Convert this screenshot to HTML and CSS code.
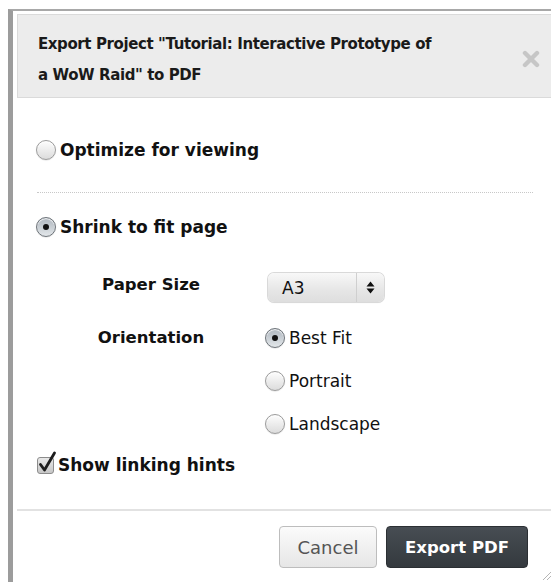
FILE: index.html
```html
<!DOCTYPE html>
<html lang="en">
<head>
<meta charset="utf-8">
<title>Export to PDF</title>
<link rel="stylesheet" href="styles.css">
</head>
<body>
<div class="frame">
  <div class="dialog">
    <div class="dialog-header">
      <h1 class="dialog-title">Export Project "Tutorial: Interactive Prototype of a WoW Raid" to PDF</h1>
      <span class="close" aria-label="Close">
        <svg width="20" height="18" viewBox="0 0 20 18">
          <path d="M4 3 L16 15 M16 3 L4 15" stroke="#c6c6c6" stroke-width="4.4" stroke-linecap="round"/>
        </svg>
      </span>
    </div>

    <div class="dialog-body">
      <label class="choice choice-main">
        <span class="radio"></span>
        <span>Optimize for viewing</span>
      </label>

      <div class="dotted-rule"></div>

      <label class="choice choice-main choice-shrink">
        <span class="radio checked"></span>
        <span>Shrink to fit page</span>
      </label>

      <div class="options">
        <div class="opt-label">Paper Size</div>
        <div class="opt-value">
          <div class="select">
            <span class="select-text">A3</span>
            <span class="select-arrows">
              <svg width="9" height="13" viewBox="0 0 9 13">
                <path d="M4.5 0.5 L8.5 5.5 L0.5 5.5 Z M4.5 12.5 L8.5 7.5 L0.5 7.5 Z" fill="#111"/>
              </svg>
            </span>
          </div>
        </div>

        <div class="opt-label">Orientation</div>
        <div class="opt-value radio-list">
          <label class="choice choice-sub">
            <span class="radio checked"></span>
            <span>Best Fit</span>
          </label>
          <label class="choice choice-sub">
            <span class="radio"></span>
            <span>Portrait</span>
          </label>
          <label class="choice choice-sub">
            <span class="radio"></span>
            <span>Landscape</span>
          </label>
        </div>
      </div>

      <label class="choice choice-main choice-hints">
        <span class="checkbox">
          <svg width="22" height="24" viewBox="0 0 22 24">
            <path d="M4.5 14.5 L8.5 20 L18.5 3" fill="none" stroke="#1c1c1c" stroke-width="2.8" stroke-linecap="round" stroke-linejoin="round"/>
          </svg>
        </span>
        <span>Show linking hints</span>
      </label>
    </div>

    <div class="dialog-footer">
      <button class="btn btn-cancel" type="button">Cancel</button>
      <button class="btn btn-primary" type="button">Export PDF</button>
    </div>

    <span class="grip">
      <svg width="14" height="14" viewBox="0 0 14 14">
        <path d="M13 3 L3 13 M13 7 L7 13 M13 11 L11 13" stroke="#b5b5b5" stroke-width="1"/>
      </svg>
    </span>
  </div>
</div>
</body>
</html>
```

FILE: styles.css
```css
html, body {
  margin: 0;
  padding: 0;
  background: #ffffff;
  overflow: hidden;
}

body {
  font-family: "DejaVu Sans", "Liberation Sans", sans-serif;
  color: #111;
  width: 551px;
  height: 582px;
}

/* outer window edge */
.frame {
  margin: 9px 0 0 8px;
  border-top: 2px solid #a8a8a8;
  border-left: 5px solid #9c9c9c;
  padding: 3px 0 0 4px;
  height: 582px;
  box-sizing: border-box;
  width: 549px;
}

.dialog {
  position: relative;
  width: 536px;
  background: #fff;
  min-height: 560px;
}

/* header */
.dialog-header {
  display: flex;
  align-items: flex-start;
  background: #ececec;
  border: 1px solid #dadada;
  border-right: none;
  height: 84px;
  box-sizing: border-box;
  padding: 14px 12px 0 20px;
}

.dialog-title {
  flex: none;
  width: 400px;
  margin: 0;
  font-size: 15px;
  letter-spacing: -0.4px;
  line-height: 31px;
  font-weight: bold;
  color: #1a1a1a;
}

.close {
  display: flex;
  margin: 21px 0 0 auto;
}

/* body */
.dialog-body {
  padding: 40px 20px 0 20px;
}

.choice {
  display: flex;
  align-items: center;
  gap: 4px;
  height: 24px;
}

.choice-main {
  font-size: 17px;
  font-weight: bold;
  margin-left: -1px;
}

.dotted-rule {
  margin-top: 30px;
  border-top: 1px dotted #c8c8c8;
}

.choice-shrink {
  margin-top: 22px;
}

.radio {
  width: 18px;
  height: 18px;
  border-radius: 50%;
  border: 1px solid #9b9b9b;
  background: linear-gradient(#fdfdfd, #dcdcdc);
  box-shadow: inset 0 1px 1px rgba(255, 255, 255, 0.9), 0 0.5px 1px rgba(0, 0, 0, 0.15);
  flex: none;
  position: relative;
}

.radio.checked {
  border-color: #6e747a;
  background: linear-gradient(#aeb6be, #e3e7ea);
}

.radio.checked::after {
  content: "";
  position: absolute;
  left: 6px;
  top: 6px;
  width: 6px;
  height: 6px;
  border-radius: 50%;
  background: #111;
}

/* paper / orientation options */
.options {
  display: grid;
  grid-template-columns: 178px 1fr;
  column-gap: 25px;
  margin: 34px 0 0 25px;
  row-gap: 24px;
}

.opt-label {
  text-align: center;
  font-size: 16.5px;
  font-weight: bold;
  line-height: 24px;
}

.select {
  display: flex;
  align-items: center;
  width: 116px;
  height: 29px;
  margin-left: 3px;
  border-radius: 6px;
  background: linear-gradient(#f8f8f8, #e6e6e6 60%, #dedede);
  box-shadow: 0 0 0 1px #d9d9d9, 0 1px 1px rgba(0, 0, 0, 0.12);
  box-sizing: border-box;
}

.select-text {
  flex: 1;
  padding-left: 14px;
  font-size: 17px;
}

.select-arrows {
  display: flex;
  align-items: center;
  justify-content: center;
  width: 27px;
  height: 100%;
  border-left: 1px solid #cfcfcf;
}

.radio-list {
  display: flex;
  flex-direction: column;
  gap: 19px;
}

.choice-sub {
  font-size: 17px;
  margin-left: 0;
}

.choice-hints {
  margin-top: 17px;
}

.checkbox {
  position: relative;
  width: 17px;
  height: 17px;
  border: 1px solid #8c8c8c;
  border-radius: 3px;
  background: linear-gradient(#e8e8e8, #c6c6c6);
  box-sizing: border-box;
  flex: none;
  margin-left: 1px;
}

.checkbox svg {
  position: absolute;
  left: -2px;
  top: -8px;
}

/* footer */
.dialog-footer {
  margin-top: 32px;
  border-top: 2px solid #e2e2e2;
  display: flex;
  justify-content: flex-end;
  gap: 9px;
  padding: 15px 25px 0 0;
}

.btn {
  height: 42px;
  border-radius: 4px;
  font-family: "DejaVu Sans", "Liberation Sans", sans-serif;
  font-size: 18px;
  padding: 0;
  cursor: pointer;
}

.btn-cancel {
  width: 98px;
  color: #555;
  border: 1px solid #bdbdbd;
  background: linear-gradient(#fbfbfb, #e6e6e6);
}

.btn-primary {
  width: 142px;
  color: #fff;
  font-size: 16.5px;
  font-weight: bold;
  border: 1px solid #2b2f33;
  background: linear-gradient(#474d53, #34393e);
}

.grip {
  position: absolute;
  left: 523px;
  top: 553px;
  display: flex;
}
```
